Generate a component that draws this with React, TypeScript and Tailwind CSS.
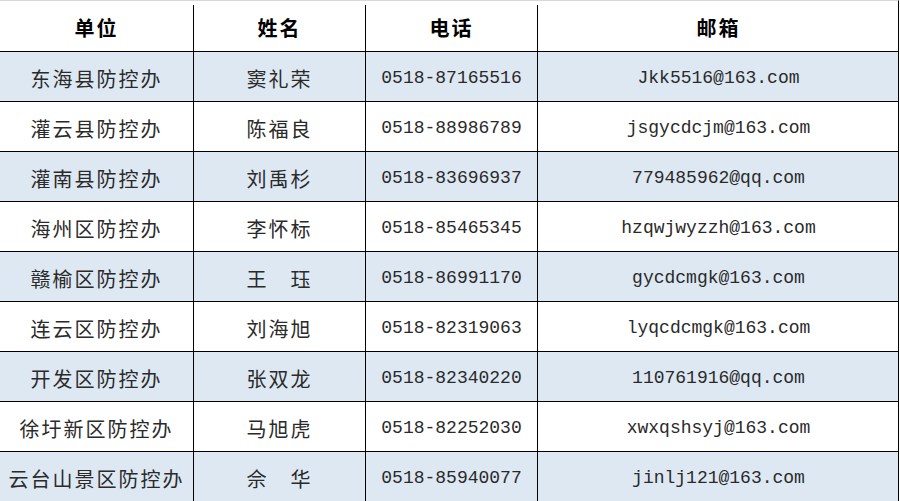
const rows = [
  ['东海县防控办', '窦礼荣', '0518-87165516', 'Jkk5516@163.com'],
  ['灌云县防控办', '陈福良', '0518-88986789', 'jsgycdcjm@163.com'],
  ['灌南县防控办', '刘禹杉', '0518-83696937', '779485962@qq.com'],
  ['海州区防控办', '李怀标', '0518-85465345', 'hzqwjwyzzh@163.com'],
  ['赣榆区防控办', '王\u3000珏', '0518-86991170', 'gycdcmgk@163.com'],
  ['连云区防控办', '刘海旭', '0518-82319063', 'lyqcdcmgk@163.com'],
  ['开发区防控办', '张双龙', '0518-82340220', '110761916@qq.com'],
  ['徐圩新区防控办', '马旭虎', '0518-82252030', 'xwxqshsyj@163.com'],
  ['云台山景区防控办', '佘\u3000华', '0518-85940077', 'jinlj121@163.com'],
]

const cjk = "font-['Noto_Sans_CJK_SC',sans-serif]"
const mono = "font-['Liberation_Mono','Noto_Sans_CJK_SC',monospace]"

export default function App() {
  return (
    <div className="w-[900px] h-[501px] overflow-hidden bg-white">
      <div className="w-[899px] border-t border-[#d9d9d9] border-r border-r-black">
        <div className="grid grid-cols-[193px_172px_172px_362px] h-[51px] pt-1 border-b border-black text-[20px] font-bold text-black tracking-[2px]">
          <div className={`flex items-center justify-center ${cjk}`}>单位</div>
          <div className={`flex items-center justify-center border-l border-black ${cjk}`}>姓名</div>
          <div className={`flex items-center justify-center border-l border-black ${cjk}`}>电话</div>
          <div className={`flex items-center justify-center border-l border-black ${cjk}`}>邮箱</div>
        </div>
        {rows.map((r, i) => (
          <div
            key={i}
            className={`grid grid-cols-[193px_172px_172px_362px] h-[50px] border-b border-black text-[#2a2a2a] ${i % 2 === 0 ? 'bg-[#dde8f3]' : 'bg-white'}`}
          >
            <div className={`flex items-center justify-center pt-1 text-[20px] tracking-[2px] ${cjk}`}>{r[0]}</div>
            <div className={`flex items-center justify-center pt-1 border-l border-black text-[20px] tracking-[2px] ${cjk}`}>{r[1]}</div>
            <div className={`flex items-center justify-center pt-1 border-l border-black text-[18px] ${mono}`}>{r[2]}</div>
            <div className={`flex items-center justify-center pt-1 border-l border-black text-[18px] ${mono}`}>{r[3]}</div>
          </div>
        ))}
      </div>
    </div>
  )
}
